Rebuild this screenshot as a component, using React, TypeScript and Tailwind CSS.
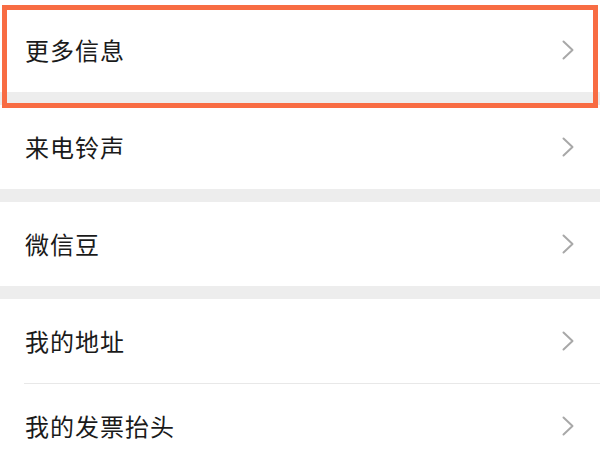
import React from "react";

const Chevron = () => (
  <svg width="12" height="20" viewBox="0 0 12 20" fill="none" className="shrink-0">
    <path d="M1.5 1.5 L10.5 10 L1.5 18.5" stroke="#a8a8a8" strokeWidth="2" strokeLinecap="round" strokeLinejoin="round" />
  </svg>
);

const Row = ({ label, first }: { label: string; first?: boolean }) => (
  <div className={`flex items-center justify-between bg-white pl-[25px] pr-[26px] ${first ? "h-[92px] pt-2" : "h-[84px]"}`}>
    <span className="text-[24px] leading-none text-[#1a1a1a] tracking-[1px]">{label}</span>
    <Chevron />
  </div>
);

const Band = () => <div className="h-[13px] bg-[#ededed]" />;

export default function App() {
  return (
    <div
      className="relative w-[600px] h-[450px] overflow-hidden bg-white"
      style={{ fontFamily: '"Noto Sans CJK SC", "Noto Sans", sans-serif' }}
    >
      <Row label="更多信息" first />
      <Band />
      <Row label="来电铃声" />
      <Band />
      <Row label="微信豆" />
      <Band />
      <Row label="我的地址" />
      <div className="bg-white pl-6">
        <div className="h-px bg-[#e8e8e8]" />
      </div>
      <Row label="我的发票抬头" />

      {/* highlight frame */}
      <div className="absolute left-[2px] top-[5px] w-[596px] h-[103px] border-[5px] border-[#f86c43]" />
    </div>
  );
}
